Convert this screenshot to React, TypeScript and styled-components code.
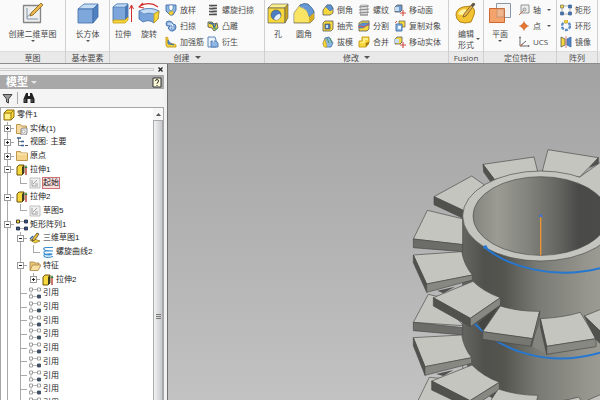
import React from "react";
import styled, { createGlobalStyle } from "styled-components";

const GlobalStyle = createGlobalStyle`
  * { box-sizing: border-box; }
  html, body, #root { height: 100%; }
  body { margin: 0; overflow: hidden; }
  button { font: inherit; color: inherit; background: none; border: 0; padding: 0; margin: 0; }
  svg { display: block; flex: none; }
`;

const Window = styled.div`
  display: flex;
  flex-direction: column;
  height: 100vh;
  font-family: "Liberation Sans", "Noto Sans CJK SC", sans-serif;
  font-size: 8px;
  color: #4a4a4a;
  background: #f0f0f0;
`;

/* ---------- Ribbon ---------- */
const Ribbon = styled.header`
  display: flex;
  flex: none;
  background: #fafafa;
  border-bottom: 1px solid #8c8c8c;
  overflow: hidden;
  font-family: "Open Sans", "Noto Sans CJK SC", sans-serif;
`;
const Panel = styled.section<{ $width: number }>`
  display: flex;
  flex-direction: column;
  flex: none;
  min-width: ${(p) => p.$width}px;
  border-right: 1px solid #cfcfcf;
`;
const Tools = styled.div<{ $gap?: number; $center?: boolean; $pad?: number }>`
  display: flex;
  height: 51px;
  padding-top: 2px;
  padding-left: ${(p) => p.$pad ?? 0}px;
  gap: ${(p) => p.$gap ?? 0}px;
  justify-content: ${(p) => (p.$center ? "center" : "flex-start")};
`;
const PanelLabel = styled.div`
  display: flex;
  align-items: center;
  justify-content: center;
  gap: 5px;
  height: 12px;
  line-height: 12px;
  background: #e9e9e9;
  border-top: 1px solid #dcdcdc;
  white-space: nowrap;
`;
const Filler = styled.div`
  flex: 1;
  background: linear-gradient(#fafafa 51px, #e9e9e9 51px);
`;
const Pair = styled.div`
  display: flex;
`;
const LargeButton = styled.button<{ $width: number }>`
  display: flex;
  flex-direction: column;
  align-items: center;
  width: ${(p) => p.$width}px;
  line-height: 11px;
  white-space: nowrap;
`;
const LargeText = styled.span`
  margin-top: 4px;
`;
const Caret = styled.span<{ $size?: number; $color?: string }>`
  display: block;
  width: 0;
  height: 0;
  border: ${(p) => p.$size ?? 2}px solid transparent;
  border-top-color: ${(p) => p.$color ?? "#555"};
  border-bottom: 0;
`;
const CaretRow = styled.span`
  display: block;
  padding-top: 1px;
`;
const FormText = styled.span`
  display: flex;
  align-items: center;
  gap: 2px;
  margin-top: 4px;
  margin-left: 6px;
`;
const Column = styled.div`
  display: grid;
  grid-template-rows: repeat(3, 16px);
  justify-items: start;
`;
const SmallButton = styled.button`
  display: flex;
  align-items: center;
  gap: 3px;
  line-height: 16px;
  white-space: nowrap;
`;
const CaretGap = styled.span`
  padding-left: 3px;
`;

const L = ({ children }: { children: React.ReactNode }) => (
  <svg width="22" height="22" viewBox="0 0 22 22" strokeLinejoin="round" aria-hidden="true">{children}</svg>
);
const S = ({ children }: { children: React.ReactNode }) => (
  <svg width="12" height="12" viewBox="0 0 12 12" strokeLinejoin="round" aria-hidden="true">{children}</svg>
);

const Y = "#f6d83c", YD = "#c79a12", YL = "#fdf08c", B = "#8fb6e2", BD = "#3f6ca8", BL = "#c5dcf5", K = "#5b5b5b";

const I = {
  sketch: (
    <L><rect x="1.5" y="3.5" width="17" height="17" fill="#eeeeee" stroke="#858585" strokeWidth="1.300" /><path d="M5 6v11h11M5 15l7-6" fill="none" stroke="#7f93ab" /><path d="M19 1l2 2L11 13l-3 1 1-3z" fill="#e8b64a" stroke="#8a6420" strokeWidth=".8" /></L>
  ),
  box: (
    <L><path d="M1 7l6-5h14l-5 5z" fill={BL} stroke={BD} strokeWidth=".8" /><path d="M1 7h15v14H1z" fill="#7ea8dc" stroke={BD} strokeWidth=".8" /><path d="M16 7l5-5v13l-5 6z" fill="#4f80c0" stroke={BD} strokeWidth=".8" /></L>
  ),
  extrude: (
    <L><path d="M1 5l4-3h11v14l-3 3H1z" fill="#7ba5db" stroke={BD} strokeWidth=".8" /><path d="M1 5h12l3-3H5z" fill={BL} stroke={BD} strokeWidth=".5" /><path d="M13 5l3-3v14l-3 3z" fill="#4b79b5" /><path d="M1 18h12l3-3v3l-3 3H1z" fill={Y} stroke={YD} strokeWidth=".8" /><path d="M19.500 20V4M17.500 7l2-4 2 4" fill="none" stroke="#d2302c" /></L>
  ),
  revolve: (
    <L><path d="M1 9q10-5 20 0l-1 8-4 4q-5-4-11-1l-4-3z" fill="#78a3da" stroke={BD} strokeWidth=".8" /><path d="M1 9q10-5 20 0l-5 3q-5-2-10 0z" fill={BL} stroke={BD} strokeWidth=".5" /><path d="M16 12l5-3-1 8-4 4z" fill={Y} stroke={YD} strokeWidth=".8" /><path d="M20 5q-8-6-18-1M5 1L1 5l5 1" fill="none" stroke="#d2302c" strokeWidth="1.200" /></L>
  ),
  hole: (
    <L><path d="M1 6l4-4h16l-3 4z" fill={YL} stroke={K} strokeWidth=".6" /><path d="M1 6h17v15H1z" fill={Y} stroke={K} strokeWidth=".7" /><path d="M18 6l3-4v14l-3 5z" fill="#c9a31c" stroke={K} strokeWidth=".6" /><circle cx="9" cy="13" r="5" fill="#4d7fc0" stroke={K} strokeWidth=".7" /><path d="M7 17a4 4 0 0 0 6-5q-4 0-6 5z" fill="#eaf3fc" /></L>
  ),
  fillet: (
    <L><path d="M1 11l6-8q4-2 8-1l6 7v8l-4 4H1z" fill={Y} stroke={K} strokeWidth=".7" /><path d="M7 3q5-3 9 0 4 3 5 8l-5 4q-1-8-9-10z" fill="#6598d4" stroke={BD} strokeWidth=".7" /><path d="M1 11l5-7q9 2 10 11v5H1z" fill={YL} opacity=".5" /><path d="M16 15l5-4v6l-5 4z" fill="#d7ad22" /></L>
  ),
  form: (
    <L><path d="M1 13q0-6 7-8l8-1q5 3 3 9l-3 7q-6 2-11 0-4-3-4-7z" fill="#f3c331" stroke="#a9780f" strokeWidth=".9" /><path d="M3 12q2-5 8-5 1 4-3 6-3 0-5-1z" fill="#fff2a0" /><path d="M9 12L18 1l2 1-9 12-3 1z" fill="#e9b64f" stroke="#765a27" strokeWidth=".8" /><path d="M16 3l3-2 1 2-3 2z" fill="#555" /></L>
  ),
  plane: (
    <L><path d="M7.500 1.500h14v14h-14z" fill="#f4f4f4" stroke="#8a97a6" /><path d="M.5 6.500h15v14H.5z" fill="#f5a36c" stroke="#d0672c" /><path d="M8 7h7v8H8z" fill="#f2b68f" stroke="#b98a68" strokeWidth=".7" /></L>
  ),
  loft: (<S><path d="M1 1h10v5l-3 5H5L1 7z" fill={B} stroke={BD} strokeWidth=".9" /><path d="M4 1h4v4l-2 2-2-2z" fill="#fff" stroke={BD} strokeWidth=".6" /><path d="M4 8l4-1v3l-2 1-2-1z" fill={Y} stroke={YD} strokeWidth=".5" /></S>),
  sweep: (<S><path d="M1 4q0-3 3-3t4 3q3 0 3 3t-3 4-5-3l2-2q-4 1-4-2z" fill={B} stroke={BD} strokeWidth=".9" /><path d="M3 4h4l1 3-3 1" fill="none" stroke="#eef6ff" /><circle cx="8" cy="8" r="1.500" fill={BL} stroke={BD} strokeWidth=".5" /></S>),
  rib: (<S><path d="M1 1l2 1v5l6 1 2 1v2H2L1 9z" fill={Y} stroke={YD} strokeWidth=".9" /><path d="M3 4q2 4 6 5l-6-1z" fill="#5b8fd0" stroke={BD} strokeWidth=".7" /></S>),
  coil: (<S><path d="M2 1.500h8M2 4.500h8M2 7.500h8M2 10.500h8" stroke="#4c4c4c" strokeWidth="1.700" /><path d="M3 2l7 2M3 5l7 2M3 8l7 2" stroke="#999" /></S>),
  emboss: (<S><path d="M1 2h4l2 2 3-1 1 5-4 3-2-3-4-1z" fill={Y} stroke={K} strokeWidth=".9" /><path d="M2 3l4 1 1 4 2-4" fill="none" stroke="#396c9e" strokeWidth="1.400" /><path d="M7 7l4 1-3 3z" fill="#65a66a" /></S>),
  derive: (<S><path d="M1 1h7l1 3v7H1z" fill="#e9f2fb" stroke={BD} strokeWidth=".8" /><path d="M4 5h5l2 2v4H4z" fill={B} stroke={BD} strokeWidth=".8" /><path d="M3 4q3-2 4 2" fill="none" stroke="#fff" /></S>),
  chamfer: (<S><path d="M1 6l4-5h4l2 3v5l-3 2H1z" fill={Y} stroke={K} strokeWidth=".8" /><path d="M5 1h4l2 4-3 2-4-4z" fill="#5d92d2" stroke={BD} strokeWidth=".6" /></S>),
  shell: (<S><path d="M1 3l2-2h8v8l-2 2H1z" fill={Y} stroke={K} strokeWidth=".8" /><path d="M3 4h5v5H3z" fill="#4a7dbd" stroke={K} strokeWidth=".8" /><path d="M4 5h2v3H4z" fill={BL} /></S>),
  draft: (<S><path d="M1 8l2-6 4-1 4 6-2 4-6 0z" fill={B} stroke={BD} strokeWidth=".8" /><path d="M1 7l2-4 2 8H2z" fill={Y} stroke={YD} strokeWidth=".6" /><path d="M5 2l2 5M8 2l2 5" stroke="#4b9b61" /></S>),
  thread: (<S><path d="M2.500 1h7v10h-7z" fill="#ddd" stroke="#999" strokeWidth=".6" /><path d="M1 3l10-1M1 6l10-1M1 9l10-1M2 11h8" stroke="#858585" strokeWidth="1.100" /></S>),
  split: (<S><path d="M1 3l3-2h7v8l-2 2H1z" fill={Y} stroke={K} strokeWidth=".8" /><path d="M1 5l3-2h7v2L8 6 5 8H1z" fill="#5b8fd0" stroke={BD} strokeWidth=".6" /><path d="M0 7l3-1 3 1 5-3" fill="none" stroke="#d7574e" /></S>),
  combine: (<S><path d="M4 1h7v6H8v4H1V5h3z" fill={Y} stroke={YD} strokeWidth=".9" /><path d="M5 2h5v2H7v3H2V6h3z" fill={YL} /><path d="M8 7l3-1v2l-3 3z" fill="#a77a10" /></S>),
  moveFace: (<S><path d="M1 3l2-2h5v5L6 8H1z" fill="#6c9bd2" stroke={K} strokeWidth=".8" /><path d="M1 3h4v4H1z" fill={BL} /><path d="M9 6v6M6 9h6" stroke="#d04c43" strokeWidth="1.100" /></S>),
  copyObj: (<S><path d="M5 1h6v6H5z" fill={Y} stroke={K} strokeWidth=".7" /><path d="M2 4h6v7H2z" fill={B} stroke={BD} strokeWidth=".9" /><path d="M4 6h3v3H4z" fill="#eef6ff" /><path d="M1 3l2-2" stroke="#d04c43" /></S>),
  moveBody: (<S><path d="M1 3l2-2h5v5L6 8H1z" fill={Y} stroke={K} strokeWidth=".8" /><path d="M1 3h4v4H1z" fill={BL} /><path d="M9 6v6M6 9h6" stroke="#d04c43" strokeWidth="1.100" /></S>),
  axis: (<S><path d="M3 1h8v8H3z" fill="#eee" stroke="#888" strokeWidth=".9" /><path d="M1 11l6-6" stroke="#c97048" /><circle cx="6.500" cy="5.500" r="1.500" fill="#ddd" stroke="#666" strokeWidth=".6" /></S>),
  point: (<S><path d="M6 1v10M1 6h10" stroke="#e2a078" /><path d="M6 2.500L9.500 6 6 9.500 2.500 6z" fill="#e8762e" stroke="#b65520" strokeWidth=".7" /></S>),
  ucs: (<S><path d="M2 1v9h9M2 10l6-5" fill="none" stroke="#686868" /><path d="M1 2l1-2 1 2zM10 9l2 1-2 1z" fill="#686868" /><path d="M2 10l3-2" stroke="#d26b42" /></S>),
  rect: (<S><path d="M2 2h8v8H2z" fill="none" stroke="#8a8a8a" strokeWidth=".6" /><path d="M.5 1h3v3h-3z" fill={Y} stroke={K} strokeWidth=".6" /><path d="M8.500 1h3v3h-3zM.5 8h3v3h-3zM8.500 8h3v3h-3z" fill="#4475b4" stroke="#33588a" strokeWidth=".6" /></S>),
  ring: (<S><circle cx="6" cy="6" r="4" fill="none" stroke="#5c8bc6" strokeWidth="2.400" strokeDasharray="3 1.200" /><path d="M4.500 0h3v3h-3z" fill={Y} stroke={YD} strokeWidth=".6" /></S>),
  mirror: (<S><path d="M1 1l4 2v6l-4 2z" fill={Y} stroke={K} strokeWidth=".8" /><path d="M11 1L7 3v6l4 2z" fill="#4f83c6" stroke={BD} strokeWidth=".8" /><path d="M6 0v12" stroke="#c44f43" strokeWidth=".7" /></S>),
  part: (<S><path d="M1 4l3-3h7v7l-3 3H1z" fill={Y} stroke="#8c6a10" /><path d="M1 4h7l3-3M8 4v7" fill="none" stroke="#8c6a10" strokeWidth=".8" /><path d="M2 5h5v5H2z" fill={YL} /></S>),
  folder: (<S><path d="M.5 10.500v-9h4l1 1.500h6v7.500z" fill="#f5d58c" stroke="#b98e3e" strokeWidth=".9" /><path d="M1 4h10" stroke="#fff0c4" /></S>),
  bodies: (<S><path d="M.5 10.500v-9h4l1 1.500h5v7.500z" fill="#f5d9a0" stroke="#b98e3e" strokeWidth=".9" /><path d="M5 6l2-1h4v5l-1 2H5z" fill="#e6e6e6" stroke="#777" strokeWidth=".8" /><circle cx="7.500" cy="8.500" r="1.500" fill="#fff" stroke="#888" strokeWidth=".6" /></S>),
  views: (<S><path d="M2.500 2v7.500h3M2.500 5.500h3" fill="none" stroke="#666" strokeWidth=".8" /><path d="M1 2h4M5 5.500h3M5 9.500h3" stroke="#3a608f" strokeWidth="1.500" /><path d="M9 9.500h3" stroke="#555" /></S>),
  feat: (<S><path d="M1 3l2-2h5v8l-2 2H1z" fill={Y} stroke="#6e5208" /><path d="M6 3l2-2v8l-2 2z" fill="#3d3d24" /><path d="M10 11V3" stroke="#b02c20" strokeWidth="1.300" /><path d="M8.500 4L10 1l1.500 3z" fill="#3a7d3a" /></S>),
  sk: (<S><path d="M1 1h10v10H1z" fill="#f0f0f0" stroke="#b3b3b3" strokeWidth=".8" /><path d="M3 3v6h6M4 7l4-4M6 7h3" fill="none" stroke="#8e8e8e" strokeWidth=".8" /></S>),
  pattern: (<S><path d="M2 2.500h8M2 9.500h8" stroke="#999" strokeWidth=".8" /><path d="M.5 1h3v3h-3z" fill={Y} stroke="#222" strokeWidth=".8" /><path d="M8.500 1h3v3h-3zM.5 8h3v3h-3zM8.500 8h3v3h-3z" fill="#31568c" stroke="#223" strokeWidth=".8" /></S>),
  sk3d: (<S><path d="M1 8l4-1 6 2-5 2z" fill={Y} stroke="#8a6a12" strokeWidth=".7" /><path d="M8 1l2 1-4 6-3 1 1-3z" fill="#f0c232" stroke="#444" strokeWidth=".8" /><path d="M1 7l3-3" stroke="#2c5fa8" strokeWidth="1.200" /></S>),
  helix: (<S><path d="M11 1.500H4Q1 2 2 3.500t8 1.500M11 5Q1 4 2 7t8 1.500M10.500 8Q1 7.500 2 10t9 .5" fill="none" stroke="#3c8fd0" strokeWidth="1.100" /></S>),
  open: (<S><path d="M1 10V2h4l1 1h4v2" fill="#e9c878" stroke="#a98242" strokeWidth=".8" /><path d="M1 10.500L3.500 5H12l-3 5.500z" fill="#f8dfa2" stroke="#a98242" strokeWidth=".8" /></S>),
  ref: (<S><path d="M3 2.500h6M3 9.500h6M2 4v4" stroke="#aaa" strokeWidth=".8" /><path d="M.5 1h3v3h-3zM8.500 1h3v3h-3zM.5 8h3v3h-3z" fill="#fff" stroke="#8a8a8a" strokeWidth=".8" /><path d="M8.500 8h3v3h-3z" fill="#456" stroke="#345" strokeWidth=".8" /></S>),
};
type IconName = keyof typeof I;

const Big = ({ icon, text, width, caret }: { icon: IconName; text: string; width: number; caret?: boolean }) => (
  <LargeButton $width={width} type="button">
    {I[icon]}
    <LargeText>{text}</LargeText>
    {caret && <CaretRow><Caret /></CaretRow>}
  </LargeButton>
);
const Small = ({ items, caret }: { items: [IconName, string][]; caret?: string[] }) => (
  <Column>
    {items.map(([icon, text]) => (
      <SmallButton key={text} type="button">
        {I[icon]}
        <span>{text}</span>
        {caret?.includes(text) && <CaretGap><Caret /></CaretGap>}
      </SmallButton>
    ))}
  </Column>
);

/* ---------- Browser panel ---------- */
const Work = styled.main`
  display: flex;
  flex: 1;
  min-height: 0;
`;
const Side = styled.aside`
  display: flex;
  flex-direction: column;
  flex: none;
  width: 167px;
  padding-right: 3px;
  background: #f1f1f1;
  color: #1c1c1c;
`;
const Grip = styled.div`
  display: flex;
  align-items: center;
  gap: 3px;
  height: 11px;
  flex: none;
`;
const GripLine = styled.span`
  flex: 1;
  height: 3px;
  border: solid #cdcdcd;
  border-width: 1px 1px 1px 0;
`;
const CloseButton = styled.button`
  width: 7px;
  height: 9px;
  display: grid;
  place-items: center;
`;
const HelpButton = styled.button`
  display: block;
`;
const Title = styled.div`
  display: flex;
  align-items: center;
  justify-content: space-between;
  height: 14px;
  flex: none;
  padding: 0 1px 0 6px;
  background: #a8a8a8;
  color: #fff;
`;
const TitleButton = styled.button`
  display: flex;
  align-items: center;
  gap: 3px;
  font-size: 11px;
  line-height: 14px;
  font-weight: 700;
`;
const Bar = styled.div`
  display: flex;
  align-items: center;
  height: 18px;
  flex: none;
  padding-left: 2px;
  gap: 4px;
  background: #f4f4f4;
`;
const BarLine = styled.span`
  width: 1px;
  height: 12px;
  background: #aaa;
  margin-right: 1px;
`;
const TreeBox = styled.div`
  display: flex;
  flex: 1;
  min-height: 0;
  background: #fff;
  border: 1px solid #a5a5a5;
  border-bottom: 0;
`;
const Tree = styled.ul`
  display: grid;
  grid-auto-rows: 1fr;
  flex: 1;
  height: 302px;
  margin: 0;
  padding: 0;
  list-style: none;
`;
const Row = styled.li`
  display: flex;
  align-items: center;
  white-space: nowrap;
  min-height: 0;
`;
const LINE = "linear-gradient(#a9a9a9, #a9a9a9)";
const Cell = styled.span<{ $kind: string }>`
  display: grid;
  place-items: center;
  width: 13px;
  align-self: stretch;
  background-repeat: no-repeat;
  background-image: ${LINE}, ${LINE};
  background-position: 6px 0, 6px 50%;
  background-size: ${(p) =>
    p.$kind === "pass" ? "1px 100%, 0 0" : p.$kind === "tee" ? "1px 100%, 7px 1px" : "1px 50%, 7px 1px"};
`;
const Expander = styled.button`
  display: grid;
  place-items: center;
  width: 7px;
  height: 7px;
  background: #fff;
  border: 1px solid #9a9a9a;
`;
const NodeIcon = styled.span`
  margin: 0 2px;
`;
const NodeText = styled.span<{ $hot?: boolean }>`
  line-height: 10px;
  outline: ${(p) => (p.$hot ? "1px solid #cf7474" : "none")};
  background: ${(p) => (p.$hot ? "#f9dede" : "none")};
`;
const Scroll = styled.div`
  display: flex;
  flex-direction: column;
  width: 10px;
  background: #eee;
`;
const ScrollUp = styled.button`
  display: grid;
  place-items: center;
  height: 12px;
  flex: none;
  background: #f7f7f7;
`;
const Thumb = styled.div`
  display: grid;
  place-items: center;
  flex: 1;
  padding-top: 112px;
  border: 1px solid #a9a9a9;
  border-bottom: 0;
  background: linear-gradient(90deg, #f2f2f2, #c6c9cc);
`;

type Node = { c: string[]; e?: "+" | "-"; i: IconName; t: string; hot?: boolean };
const nodes: Node[] = [
  { c: [], i: "part", t: "零件1" },
  { c: ["tee"], e: "+", i: "bodies", t: "实体(1)" },
  { c: ["tee"], e: "+", i: "views", t: "视图: 主要" },
  { c: ["tee"], e: "+", i: "folder", t: "原点" },
  { c: ["tee"], e: "-", i: "feat", t: "拉伸1" },
  { c: ["pass", "end"], i: "sk", t: "起始", hot: true },
  { c: ["tee"], e: "-", i: "feat", t: "拉伸2" },
  { c: ["pass", "end"], i: "sk", t: "草图5" },
  { c: ["tee"], e: "-", i: "pattern", t: "矩形阵列1" },
  { c: ["pass", "tee"], e: "-", i: "sk3d", t: "三维草图1" },
  { c: ["pass", "pass", "end"], i: "helix", t: "螺旋曲线2" },
  { c: ["pass", "tee"], e: "-", i: "open", t: "特征" },
  { c: ["pass", "pass", "end"], e: "+", i: "feat", t: "拉伸2" },
  ...Array.from({ length: 9 }, (): Node => ({ c: ["pass", "tee"], i: "ref", t: "引用" })),
];

/* ---------- Model view ---------- */
const View = styled.section`
  flex: 1;
  min-width: 0;
  border-left: 1px solid #6f6f6f;
  background: linear-gradient(#a2a2a2, #c2c2c2);
`;
const Scene = styled.svg`
  width: 100%;
  height: 100%;
`;

const TOP = "#c5c5c0", DARK = "#51514e", FRONT = "#888882";
const Face = ({ d, fill }: { d: string; fill: string }) => (
  <path d={d} fill={fill} stroke="#4a4a48" strokeWidth="2" strokeLinejoin="round" />
);

const Model = () => (
  <Scene viewBox="24 12 1296 1008" preserveAspectRatio="xMaxYMin slice" role="img" aria-label="模型">
    <defs>
      <linearGradient id="outer" gradientUnits="userSpaceOnUse" x1="908" x2="1376" y1="0" y2="0">
        <stop offset="0" stopColor="#656561" /><stop offset=".14" stopColor="#50504d" /><stop offset=".26" stopColor="#54544f" />
        <stop offset=".48" stopColor="#7a7a75" /><stop offset=".8" stopColor="#96968e" /><stop offset="1" stopColor="#a0a098" />
      </linearGradient>
      <linearGradient id="inner" gradientUnits="userSpaceOnUse" x1="939" x2="1345" y1="0" y2="0">
        <stop offset="0" stopColor="#85857f" /><stop offset=".18" stopColor="#9b9b94" /><stop offset=".4" stopColor="#84847e" />
        <stop offset=".62" stopColor="#666662" /><stop offset=".78" stopColor="#4a4a48" /><stop offset="1" stopColor="#4b4b49" />
      </linearGradient>
    </defs>
    <Face fill={TOP} d="M1164 269L1315 293 1258 352 1147 333z" />
    <Face fill={DARK} d="M1315 293v18L1290 322z" />
    <Face fill={TOP} d="M969 313L1122 291 1133 335 1003 358z" />
    <Face fill={DARK} d="M969 313L1003 358 995 370 971 336z" />
    <Face fill={TOP} d="M822 410L935 348 972 374 912 452z" />
    <Face fill={DARK} d="M822 410L912 452V476L822 434z" />
    <Face fill={TOP} d="M802 451L910 477V554L760 537z" />
    <Face fill="#6c6c68" d="M760 537L910 554V575L760 563z" />
    <Face fill={TOP} d="M805 703L835 710 910 797 760 787z" />
    <Face fill="#6c6c68" d="M760 787L910 803V825L760 812z" />
    <Face fill={TOP} d="M808 952L840 955 900 1030H770z" />
    <path d="M908 468H1376V1040H1040Q908 980 908 830z" fill="url(#outer)" />
    <path d="M908 468V1020" stroke="#4a4a48" strokeWidth="2" />
    <ellipse cx="1142" cy="468" rx="234" ry="135" fill={TOP} stroke="#4a4a48" strokeWidth="2" />
    <path d="M1258 352L1320 308V412L1262 370z" fill={TOP} />
    <path d="M1258 352L1320 308" stroke="#4a4a48" strokeWidth="2" />
    <ellipse cx="1142" cy="468" rx="203" ry="118" fill="url(#inner)" stroke="#4a4a48" strokeWidth="2" />
    <path d="M1142 472V586" stroke="#ef9433" strokeWidth="4" />
    <path d="M1136 470l6-9 6 9z" fill="#3b6fdd" />
    <path d="M973 560C1040 620 1180 660 1320 625" fill="none" stroke="#2577cf" strokeWidth="6" />
    <circle cx="976" cy="562" r="6" fill="#2577cf" />
    <path d="M943 790C1020 870 1160 925 1320 878" fill="none" stroke="#2577cf" strokeWidth="6" />

    <path d="M832 692L885 680 850 700z" fill={DARK} />
    <Face fill={TOP} d="M760 585L905 575Q912 615 937 645L800 672z" />
    <Face fill={DARK} d="M760 585L800 672V697L760 608z" />
    <Face fill={FRONT} d="M800 672L937 645V660L800 697z" />
    <path d="M955 790L1015 738 968 812z" fill="#454542" />
    <path d="M1139 756L1118 860 1160 882z" fill="#85857f" />
    <Face fill={TOP} d="M820 713L939 664Q970 695 1021 713L931 775z" />
    <Face fill={DARK} d="M820 713L931 775V800L820 738z" />
    <Face fill={FRONT} d="M931 775L1021 713V735L931 800z" />
    <Face fill={TOP} d="M1021 738Q1075 755 1139 754L1118 836 968 815z" />
    <Face fill="#777772" d="M968 815L1118 836 1113 859 968 838z" />
    <Face fill="#777772" d="M1139 754L1118 836 1113 859 1137 785z" />
    <Face fill={TOP} d="M1141 776Q1210 773 1261 757L1308 836 1160 859z" />
    <Face fill={FRONT} d="M1160 859L1308 836V860L1160 883z" />
    <Face fill={DARK} d="M1141 776L1160 859V883L1141 800z" />
    <Face fill={TOP} d="M1273 768L1330 745V822z" />
    <Face fill={DARK} d="M1273 768L1330 822V860L1306 836z" />

    <path d="M828 942L880 930 850 948z" fill={DARK} />
    <Face fill={TOP} d="M760 833L905 825Q912 865 935 893L795 920z" />
    <Face fill={DARK} d="M760 833L795 920V946L760 857z" />
    <Face fill={FRONT} d="M795 920L935 893V910L795 946z" />
    <Face fill={TOP} d="M815 963L936 915Q968 948 1018 967L930 1022z" />
    <Face fill={DARK} d="M815 963L930 1022V1045L815 990z" />
    <Face fill={FRONT} d="M930 1022L1018 967V989L930 1045z" />
    <Face fill={TOP} d="M1015 987Q1070 1006 1134 1006L1120 1060 980 1040z" />
    <Face fill={TOP} d="M1140 1028Q1210 1025 1256 1011L1290 1060H1160z" />
    <Face fill={TOP} d="M1280 1022L1330 1000V1050z" />
  </Scene>
);

export default function App() {
  return (
    <Window>
      <GlobalStyle />
      <Ribbon>
        <Panel $width={66}>
          <Tools $center><Big icon="sketch" text="创建二维草图" width={62} caret /></Tools>
          <PanelLabel>草图</PanelLabel>
        </Panel>
        <Panel $width={44}>
          <Tools $center><Big icon="box" text="长方体" width={40} caret /></Tools>
          <PanelLabel>基本要素</PanelLabel>
        </Panel>
        <Panel $width={155}>
          <Tools $gap={3}>
            <Pair><Big icon="extrude" text="拉伸" width={26} /><Big icon="revolve" text="旋转" width={26} /></Pair>
            <Small items={[["loft", "放样"], ["sweep", "扫掠"], ["rib", "加强筋"]]} />
            <Small items={[["coil", "螺旋扫掠"], ["emboss", "凸雕"], ["derive", "衍生"]]} />
          </Tools>
          <PanelLabel>创建 <Caret $size={3} /></PanelLabel>
        </Panel>
        <Panel $width={184}>
          <Tools $gap={5}>
            <Pair><Big icon="hole" text="孔" width={26} /><Big icon="fillet" text="圆角" width={26} /></Pair>
            <Small items={[["chamfer", "倒角"], ["shell", "抽壳"], ["draft", "拔模"]]} />
            <Small items={[["thread", "螺纹"], ["split", "分割"], ["combine", "合并"]]} />
            <Small items={[["moveFace", "移动面"], ["copyObj", "复制对象"], ["moveBody", "移动实体"]]} />
          </Tools>
          <PanelLabel>修改 <Caret $size={3} /></PanelLabel>
        </Panel>
        <Panel $width={35}>
          <Tools $center>
            <LargeButton $width={34} type="button">
              {I.form}
              <FormText><span>编辑<br />形式</span><Caret /></FormText>
            </LargeButton>
          </Tools>
          <PanelLabel>Fusion</PanelLabel>
        </Panel>
        <Panel $width={73}>
          <Tools $gap={2}>
            <Big icon="plane" text="平面" width={32} caret />
            <Small items={[["axis", "轴"], ["point", "点"], ["ucs", "UCS"]]} caret={["轴", "点"]} />
          </Tools>
          <PanelLabel>定位特征</PanelLabel>
        </Panel>
        <Panel $width={41}>
          <Tools $pad={3}>
            <Small items={[["rect", "矩形"], ["ring", "环形"], ["mirror", "镜像"]]} />
          </Tools>
          <PanelLabel>阵列</PanelLabel>
        </Panel>
        <Filler />
      </Ribbon>
      <Work>
        <Side>
          <Grip>
            <GripLine />
            <CloseButton type="button" aria-label="关闭">
              <svg width="5" height="5" viewBox="0 0 5 5"><path d="M.5.5l4 4M4.500.5l-4 4" stroke="#222" strokeWidth="1.300" /></svg>
            </CloseButton>
          </Grip>
          <Title>
            <TitleButton type="button">模型 <Caret $size={3} $color="#e6e6e6" /></TitleButton>
            <HelpButton type="button" aria-label="帮助">
              <svg width="11" height="11" viewBox="0 0 11 11"><path d="M1 1h8v9H1z" fill="#fbf8d8" stroke="#333" /><path d="M3.500 4q0-1.500 1.500-1.500T6.500 4 5 6v.7M5 8v1" fill="none" stroke="#333" /></svg>
            </HelpButton>
          </Title>
          <Bar>
            <button type="button" aria-label="筛选">
              <svg width="11" height="11" viewBox="0 0 11 11"><path d="M1 1.500h9L6.500 6v4l-2-1V6z" fill="#999" stroke="#444" /></svg>
            </button>
            <BarLine />
            <button type="button" aria-label="查找">
              <svg width="12" height="12" viewBox="0 0 12 12"><path d="M3 1h2v3h2V1h2l2.500 6v4H7.500V7h-3v4H.5V7z" fill="#222" /><path d="M2 7v3M9 7v3" stroke="#888" strokeWidth=".7" /></svg>
            </button>
          </Bar>
          <TreeBox>
            <Tree>
              {nodes.map((n, k) => (
                <Row key={k}>
                  {n.c.map((kind, j) => (
                    <Cell key={j} $kind={kind}>
                      {n.e && j === n.c.length - 1 && (
                        <Expander type="button" aria-label={n.e === "+" ? "展开" : "折叠"}>
                          <svg width="5" height="5" viewBox="0 0 5 5"><path d={n.e === "+" ? "M1 2.500h3M2.500 1v3" : "M1 2.500h3"} stroke="#222" /></svg>
                        </Expander>
                      )}
                    </Cell>
                  ))}
                  <NodeIcon>{I[n.i]}</NodeIcon>
                  <NodeText $hot={n.hot}>{n.t}</NodeText>
                </Row>
              ))}
            </Tree>
            <Scroll>
              <ScrollUp type="button" aria-label="向上滚动">
                <svg width="5" height="3" viewBox="0 0 5 3"><path d="M0 3l2.500-3L5 3z" fill="#555" /></svg>
              </ScrollUp>
              <Thumb>
                <svg width="5" height="5" viewBox="0 0 5 5"><path d="M0 .5h5M0 2.500h5M0 4.500h5" stroke="#777" /></svg>
              </Thumb>
            </Scroll>
          </TreeBox>
        </Side>
        <View><Model /></View>
      </Work>
    </Window>
  );
}
